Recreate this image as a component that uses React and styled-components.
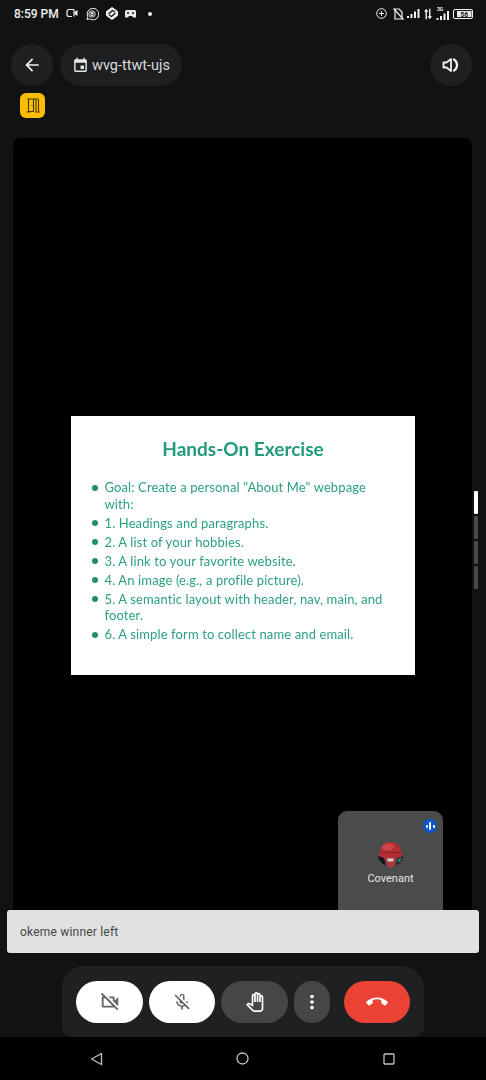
import React from 'react';
import styled, { createGlobalStyle } from 'styled-components';
import {
  MdArrowBack,
  MdEvent,
  MdOutlineVideocamOff,
  MdOutlineMicOff,
  MdOutlinePanTool,
  MdMoreVert,
  MdCallEnd,
} from 'react-icons/md';

const GlobalStyle = createGlobalStyle`
  html, body {
    margin: 0;
    padding: 0;
    background: #121213;
  }
  * {
    box-sizing: border-box;
  }
`;

const Page = styled.div`
  width: 486px;
  height: 1080px;
  display: flex;
  flex-direction: column;
  background: #121213;
  font-family: Roboto, "Liberation Sans", sans-serif;
  overflow: hidden;
`;

const StatusBar = styled.div`
  height: 29px;
  padding: 0 13px 2px 14px;
  display: flex;
  align-items: center;
  justify-content: space-between;
  color: #f2f2f2;
`;

const StatusGroup = styled.div`
  display: flex;
  align-items: center;
  gap: ${(p) => p.$gap}px;
`;

const Clock = styled.span`
  font-size: 12px;
  font-weight: 500;
`;

const StatusSlot = styled.span`
  display: flex;
  margin-left: ${(p) => p.$ml || 0}px;
`;

const NoticeDot = styled.span`
  width: 4px;
  height: 4px;
  margin-left: 5px;
  border-radius: 50%;
  background: #f2f2f2;
`;

const Header = styled.div`
  margin-top: 15px;
  padding: 0 14px 0 11px;
  display: flex;
  align-items: center;
  justify-content: space-between;
`;

const HeaderLeft = styled.div`
  display: flex;
  align-items: center;
  gap: 7px;
`;

const RoundButton = styled.div`
  width: 42px;
  height: 42px;
  border-radius: 50%;
  background: #1d1f20;
  color: #eeeeee;
  display: flex;
  align-items: center;
  justify-content: center;
`;

const MeetingPill = styled.div`
  height: 42px;
  width: 122px;
  padding-left: 12px;
  border-radius: 21px;
  background: #1d1f20;
  color: #dcdcdc;
  display: flex;
  align-items: center;
  gap: 3px;
  font-size: 14.5px;
`;

const HostBadge = styled.div`
  width: 25px;
  height: 25px;
  margin: 7px 0 0 20px;
  border-radius: 6px;
  background: #fbbc04;
  display: flex;
  align-items: center;
  justify-content: center;
`;

const Stage = styled.div`
  position: relative;
  width: 459px;
  height: 815px;
  margin: 20px 0 0 13px;
  border-radius: 8px 8px 0 0;
  background: #000;
  display: flex;
  align-items: center;
  justify-content: center;
`;

const Slide = styled.div`
  width: 344px;
  height: 259px;
  padding: 20px 20px 0 21px;
  background: #fff;
  color: #2c9f80;
  font-family: Lato, "Open Sans", sans-serif;
  filter: blur(0.5px);
`;

const SlideTitle = styled.div`
  font-size: 19px;
  font-weight: 700;
  line-height: 26px;
  text-align: center;
  color: #229b7a;
`;

const SlideList = styled.ul`
  list-style: none;
  margin: 17px 0 0;
  padding: 0;
`;

const SlideItem = styled.li`
  position: relative;
  padding-left: 13px;
  margin-bottom: 2.5px;
  font-size: 13px;
  line-height: 16.5px;
  letter-spacing: 0.12px;

  &::before {
    content: '';
    position: absolute;
    left: 0;
    top: 5.5px;
    width: 6px;
    height: 6px;
    border-radius: 50%;
    background: #1f8f70;
  }
`;

const PageIndicator = styled.div`
  position: absolute;
  right: -6px;
  top: 353px;
  width: 4px;
  display: flex;
  flex-direction: column;
  gap: 2px;
`;

const IndicatorStep = styled.div`
  height: 23px;
  border-radius: 1px;
  background: ${(p) => (p.$active ? '#ffffff' : '#4a4a4a')};
`;

const SelfTile = styled.div`
  position: absolute;
  right: 29px;
  bottom: 42px;
  width: 105px;
  height: 100px;
  border-radius: 9px 9px 0 0;
  background: #4a4b4b;
  display: flex;
  flex-direction: column;
  align-items: center;
  padding-top: 30px;
  color: #e8e8e8;
  font-size: 11px;
`;

const AudioDot = styled.div`
  position: absolute;
  top: 8px;
  right: 6px;
  width: 14px;
  height: 14px;
  border-radius: 50%;
  background: #0b57d0;
  display: flex;
  align-items: center;
  justify-content: center;
  gap: 1.5px;
`;

const AudioBar = styled.span`
  width: 2px;
  height: ${(p) => p.$h}px;
  border-radius: 1px;
  background: #fff;
`;

const AvatarWrap = styled.div`
  display: flex;
  filter: blur(0.4px);
`;

const TileName = styled.div`
  margin-top: 4px;
`;

const Toast = styled.div`
  position: absolute;
  left: -6px;
  right: -7px;
  bottom: 0;
  height: 43px;
  padding-left: 13px;
  border-radius: 3px;
  background: #e1e1e1;
  color: #444746;
  font-size: 12px;
  letter-spacing: 0.2px;
  display: flex;
  align-items: center;
`;

const ControlBar = styled.div`
  width: 362px;
  height: 71px;
  margin: 13px 0 0 62px;
  padding: 15px 14px 14px;
  border-radius: 22px 22px 10px 10px;
  background: #1e2021;
  display: flex;
  gap: 6px;
`;

const ControlButton = styled.div`
  width: ${(p) => p.$w}px;
  height: 42px;
  margin-left: ${(p) => p.$ml || 0}px;
  border-radius: 21px;
  background: ${(p) => p.$bg};
  color: ${(p) => p.$fg};
  display: flex;
  align-items: center;
  justify-content: center;
`;

const NavBar = styled.div`
  flex: 1;
  background: #000;
  display: flex;
  align-items: center;
  padding-left: 23px;
  color: #c4c4c4;
`;

const NavSlot = styled.div`
  width: 146.5px;
  display: flex;
  justify-content: center;
`;

const CameraGlyph = () => (
  <svg width="12" height="11" viewBox="0 0 12 11" fill="none" stroke="#f2f2f2" strokeWidth="1.2">
    <path d="M8 1.500H3a2 2 0 0 0-2 2v3a2 2 0 0 0 2 2h3" />
    <path d="M8 1.500v7" />
    <path d="M8.500 4l3-2v6l-3-2z" fill="#f2f2f2" stroke="none" />
  </svg>
);

const BubbleGlyph = () => (
  <svg width="14" height="14" viewBox="0 0 14 14" fill="none" stroke="#f2f2f2" strokeWidth="1">
    <path d="M2 12.500l.8-2.800A5.800 5.800 0 1 1 4.600 11.800z" />
    <circle cx="7" cy="7" r="3.200" strokeWidth="0.9" />
    <text x="7" y="9" fontSize="5.500" fontFamily="Roboto" fontWeight="700" fill="#f2f2f2" stroke="none" textAnchor="middle">B</text>
  </svg>
);

const SyncGlyph = () => (
  <svg width="12" height="13" viewBox="0 0 12 13">
    <path d="M6 0.500l5.500 4v4L6 12.500l-5.500-4v-4z" fill="#f2f2f2" strokeLinejoin="round" stroke="#f2f2f2" />
    <path d="M2.500 7L6.500 3.500l2.500 1.500M9.500 6L5.500 9.500 3 8" fill="none" stroke="#121213" strokeWidth="1.300" />
  </svg>
);

const GameGlyph = () => (
  <svg width="11" height="8" viewBox="0 0 11 8">
    <path d="M1.500 0h8A1.500 1.500 0 0 1 11 1.500v6L8 7.600 7 6H4L3 7.600 0 7.500v-6A1.500 1.500 0 0 1 1.500 0z" fill="#e8e8e8" />
    <circle cx="3" cy="3" r="1" fill="#121213" />
    <circle cx="8" cy="3" r="1" fill="#121213" />
  </svg>
);

const PlusCircleGlyph = () => (
  <svg width="11" height="11" viewBox="0 0 11 11" fill="none" stroke="#f2f2f2" strokeWidth="1">
    <circle cx="5.500" cy="5.500" r="4.800" />
    <path d="M3 5.500h5M5.500 3v5" />
  </svg>
);

const MutedFileGlyph = () => (
  <svg width="11" height="12" viewBox="0 0 11 12" fill="none" stroke="#f2f2f2" strokeWidth="1.200">
    <path d="M2 1h4l3 3v7H2z" />
    <path d="M0.500 0.500l10 11" />
  </svg>
);

const SignalGlyph = () => (
  <svg width="13" height="9" viewBox="0 0 13 9" fill="#f2f2f2">
    <rect x="0" y="7" width="2" height="2" />
    <rect x="3.500" y="5" width="2" height="4" />
    <rect x="7" y="2.500" width="2" height="6.500" />
    <rect x="10.500" y="0" width="2" height="9" />
  </svg>
);

const TransferGlyph = () => (
  <svg width="8" height="12" viewBox="0 0 9 12" fill="#f2f2f2">
    <path d="M2.500 0L5 3.500H3.300V12H1.700V3.500H0z" />
    <path d="M6.500 12L4 8.500h1.700V0h1.600v8.500H9z" />
  </svg>
);

const Signal3gGlyph = () => (
  <svg width="14" height="15" viewBox="0 0 14 15" fill="#f2f2f2">
    <text x="1" y="4.500" fontSize="5" fontFamily="Roboto" fontWeight="700">3G</text>
    <rect x="0.500" y="12" width="2" height="2" />
    <rect x="4" y="10" width="2" height="4" />
    <rect x="7.500" y="7.500" width="2" height="6.500" />
    <rect x="11" y="5" width="2" height="9" />
  </svg>
);

const BatteryGlyph = () => (
  <svg width="20" height="10" viewBox="0 0 20 10">
    <rect x="0.500" y="0.500" width="19" height="9" rx="1.500" fill="none" stroke="#f2f2f2" />
    <rect x="4" y="2" width="14.500" height="6" fill="#e8e8e8" />
    <text x="11.200" y="7.600" fontSize="6.500" fontFamily="Roboto" fontWeight="700" fill="#121213" textAnchor="middle">56</text>
  </svg>
);

const VolumeGlyph = () => (
  <svg width="18" height="16" viewBox="0 0 18 16" fill="none" stroke="#f2f2f2">
    <path d="M1.500 5.500h3L9 2v12l-4.500-3.500h-3z" strokeWidth="1.800" strokeLinejoin="round" />
    <path d="M12 2.500a6.500 6.500 0 0 1 0 11" strokeWidth="2.200" strokeLinecap="round" />
  </svg>
);

const DoorGlyph = () => (
  <svg width="14" height="15" viewBox="0 0 14 15" fill="none" stroke="#4a3a00" strokeWidth="1.100">
    <path d="M1.500 1h11" />
    <path d="M2.500 1v12.500H7.500V1" />
    <path d="M10 1.500v12M12.500 1.500v12" />
    <path d="M0.500 14h4M9 14h5" />
    <circle cx="6" cy="7.500" r="0.600" fill="#4a3a00" stroke="none" />
  </svg>
);

const AvatarGlyph = () => (
  <svg width="27" height="27" viewBox="0 0 27 27">
    <path d="M3 12C3 4 8 1 13.500 1S24 4 24 12l2.500 3-6 2.500h-14L1 15z" fill="#b32d33" />
    <ellipse cx="11" cy="6" rx="6" ry="3.500" fill="#cf4347" />
    <path d="M4 11.500h19" stroke="#8c2429" strokeWidth="1.200" />
    <path d="M1 15l6 2 2 7.500C5 23 2 20 1 15z" fill="#12151c" />
    <path d="M26.500 15l-6 2-2 7.500c4-1.500 7-4.500 8-9.500z" fill="#1c2a2c" />
    <path d="M24.500 17l-3 1-1 3.500c2-.8 3.300-2.300 4-4.500z" fill="#3f8f7c" />
    <path d="M7.500 16.500h12l-2 8-2 2h-4l-2-2z" fill="#a8383c" />
    <path d="M10 17.500h7l-1 3h-5z" fill="#d9cdcb" />
  </svg>
);

const BackTriangle = () => (
  <svg width="13" height="14" viewBox="0 0 13 14" fill="none" stroke="currentColor" strokeWidth="1.300">
    <path d="M11.500 1.500v11L1.500 7z" strokeLinejoin="round" />
  </svg>
);

const HomeCircle = () => (
  <svg width="13" height="13" viewBox="0 0 13 13" fill="none" stroke="currentColor" strokeWidth="1.300">
    <circle cx="6.500" cy="6.500" r="5.500" />
  </svg>
);

const RecentSquare = () => (
  <svg width="12" height="12" viewBox="0 0 12 12" fill="none" stroke="currentColor" strokeWidth="1.300">
    <rect x="1" y="1" width="10" height="10" rx="1" />
  </svg>
);

const slideItems = [
  'Goal: Create a personal "About Me" webpage with:',
  '1. Headings and paragraphs.',
  '2. A list of your hobbies.',
  '3. A link to your favorite website.',
  '4. An image (e.g., a profile picture).',
  '5. A semantic layout with header, nav, main, and footer.',
  '6. A simple form to collect name and email.',
];

export default function App() {
  return (
    <Page>
      <GlobalStyle />
      <StatusBar>
        <StatusGroup $gap={7}>
          <Clock>8:59 PM</Clock>
          <CameraGlyph />
          <BubbleGlyph />
          <SyncGlyph />
          <GameGlyph />
          <NoticeDot />
        </StatusGroup>
        <StatusGroup $gap={3}>
          <PlusCircleGlyph />
          <StatusSlot $ml={3}>
            <MutedFileGlyph />
          </StatusSlot>
          <SignalGlyph />
          <StatusSlot $ml={1}>
            <TransferGlyph />
          </StatusSlot>
          <StatusSlot $ml={1}>
            <Signal3gGlyph />
          </StatusSlot>
          <BatteryGlyph />
        </StatusGroup>
      </StatusBar>

      <Header>
        <HeaderLeft>
          <RoundButton>
            <MdArrowBack size={20} />
          </RoundButton>
          <MeetingPill>
            <MdEvent size={17} color="#e8e8e8" />
            wvg-ttwt-ujs
          </MeetingPill>
        </HeaderLeft>
        <RoundButton>
          <VolumeGlyph />
        </RoundButton>
      </Header>

      <HostBadge>
        <DoorGlyph />
      </HostBadge>

      <Stage>
        <Slide>
          <SlideTitle>Hands-On Exercise</SlideTitle>
          <SlideList>
            {slideItems.map((item) => (
              <SlideItem key={item}>{item}</SlideItem>
            ))}
          </SlideList>
        </Slide>
        <PageIndicator>
          <IndicatorStep $active />
          <IndicatorStep />
          <IndicatorStep />
          <IndicatorStep />
        </PageIndicator>
        <SelfTile>
          <AudioDot>
            <AudioBar $h={3} />
            <AudioBar $h={8} />
            <AudioBar $h={3} />
          </AudioDot>
          <AvatarWrap>
            <AvatarGlyph />
          </AvatarWrap>
          <TileName>Covenant</TileName>
        </SelfTile>
        <Toast>okeme winner left</Toast>
      </Stage>

      <ControlBar>
        <ControlButton $w={67} $bg="#ffffff" $fg="#5f6368">
          <MdOutlineVideocamOff size={22} />
        </ControlButton>
        <ControlButton $w={66} $bg="#ffffff" $fg="#5f6368">
          <MdOutlineMicOff size={20} />
        </ControlButton>
        <ControlButton $w={67} $bg="#444746" $fg="#ffffff">
          <MdOutlinePanTool size={20} />
        </ControlButton>
        <ControlButton $w={36} $bg="#444746" $fg="#ffffff">
          <MdMoreVert size={22} />
        </ControlButton>
        <ControlButton $w={66} $bg="#ea4335" $fg="#ffffff" $ml={8}>
          <MdCallEnd size={22} />
        </ControlButton>
      </ControlBar>

      <NavBar>
        <NavSlot>
          <BackTriangle />
        </NavSlot>
        <NavSlot>
          <HomeCircle />
        </NavSlot>
        <NavSlot>
          <RecentSquare />
        </NavSlot>
      </NavBar>
    </Page>
  );
}
